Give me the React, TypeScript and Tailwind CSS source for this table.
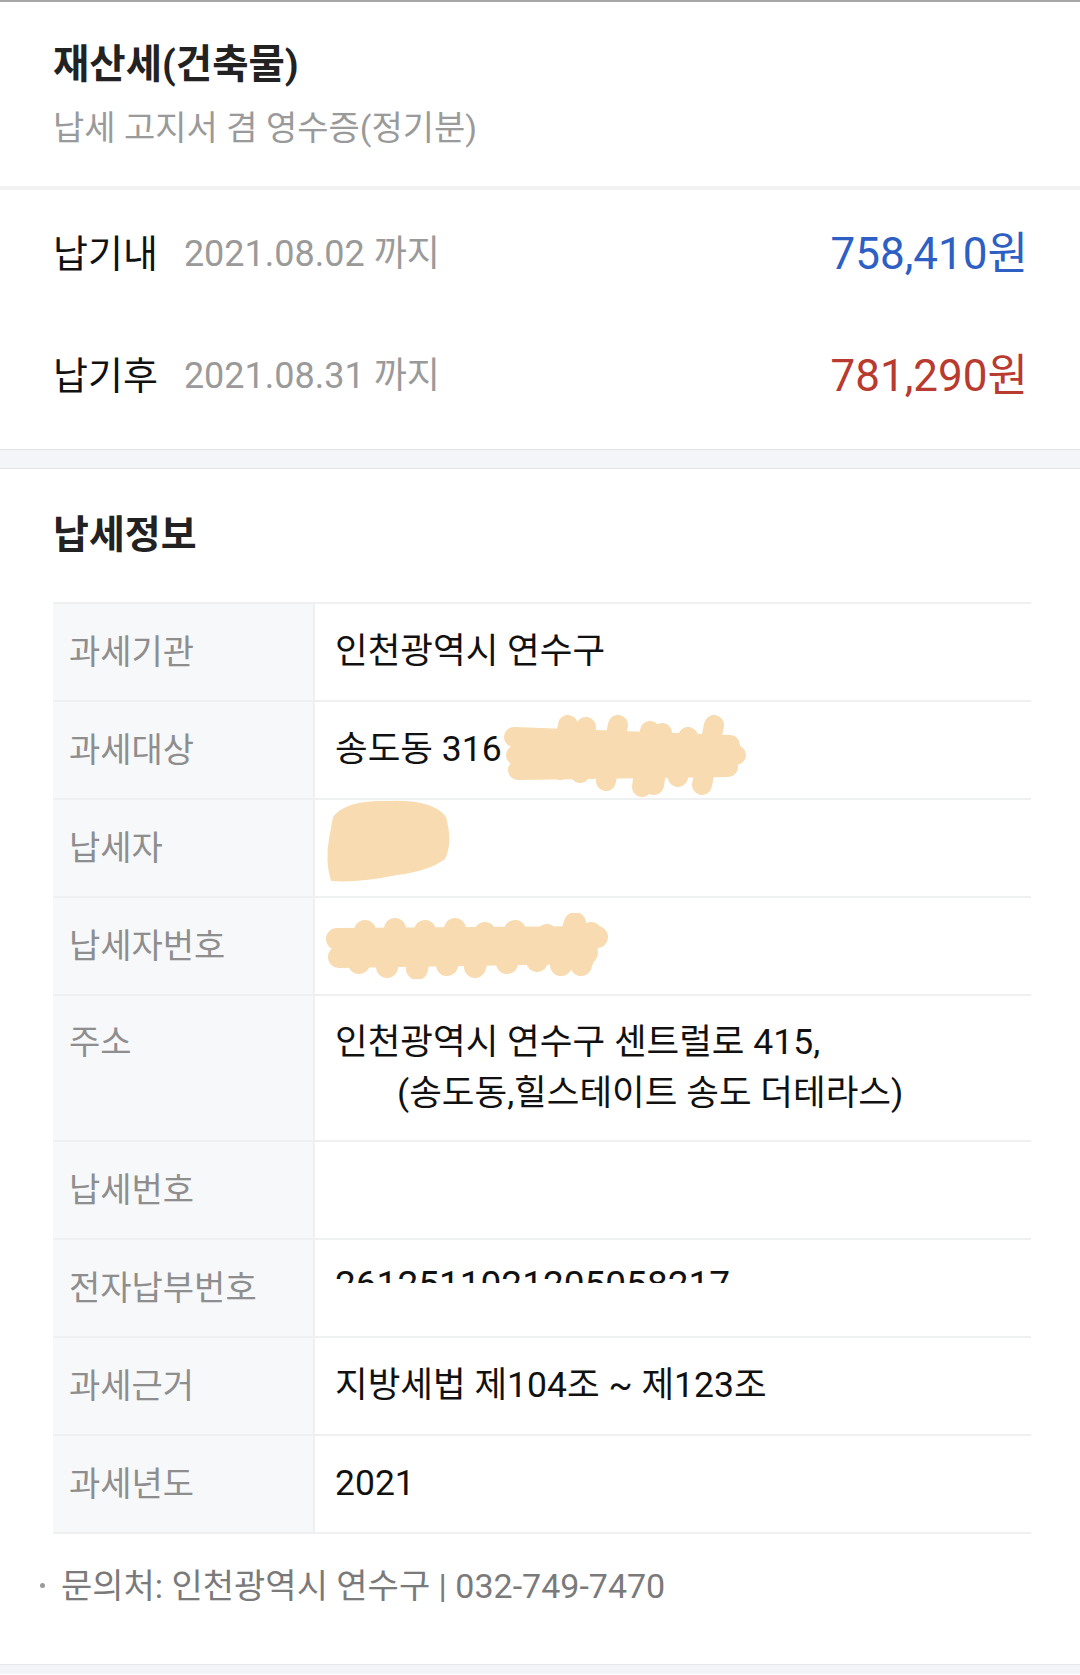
import React from "react";

const PEACH = "#f8dbb0";

function Blob1() {
  return (
    <svg width="245" height="82" viewBox="0 0 245 82" className="shrink-0 mt-[12px]">
      <g stroke={PEACH} strokeWidth="20" strokeLinecap="round" strokeLinejoin="round" fill="none">
        <path d="M12 22 L228 30" />
        <path d="M14 40 L234 40" />
        <path d="M16 55 L226 52" />
        <path d="M66 10 L58 55 M84 12 L78 58 M116 10 L104 66 M148 16 L140 72 M160 18 L152 70 M186 22 L176 62 M212 10 L200 70" />
      </g>
    </svg>
  );
}

function Blob2() {
  return (
    <svg width="128" height="84" viewBox="0 0 128 84" className="shrink-0 -ml-[10px] mb-[14px]">
      <path
        d="M8 18 Q20 1 62 2 Q108 0 121 18 Q128 44 120 60 Q104 72 72 76 Q34 84 6 82 Q0 62 4 40 Z"
        fill={PEACH}
      />
    </svg>
  );
}

function Blob3() {
  return (
    <svg width="285" height="66" viewBox="0 0 285 66" className="shrink-0 -ml-[10px]">
      <g stroke={PEACH} strokeWidth="22" strokeLinecap="round" strokeLinejoin="round" fill="none">
        <path d="M12 26 L272 24" />
        <path d="M14 44 L262 40" />
        <path d="M40 18 L34 50 M70 16 L62 54 M100 18 L92 56 M130 16 L122 52 M160 20 L150 54 M190 18 L182 50 M222 22 L212 48 M250 10 L236 52 M266 20 L256 52" />
      </g>
    </svg>
  );
}

type Row = { label: string; value: React.ReactNode; tall?: boolean };

const rows: Row[] = [
  { label: "과세기관", value: <span>인천광역시 연수구</span> },
  {
    label: "과세대상",
    value: (
      <>
        <span className="whitespace-nowrap">송도동 316</span>
        <Blob1 />
      </>
    ),
  },
  { label: "납세자", value: <Blob2 /> },
  { label: "납세자번호", value: <Blob3 /> },
  {
    label: "주소",
    tall: true,
    value: (
      <div className="leading-[51px]">
        <div>인천광역시 연수구 센트럴로 415,</div>
        <div className="pl-[62px]">(송도동,힐스테이트 송도 더테라스)</div>
      </div>
    ),
  },
  { label: "납세번호", value: <span></span> },
  {
    label: "전자납부번호",
    value: (
      <div className="h-[17px] overflow-hidden self-start mt-[26px]">
        <div className="leading-none text-[37px]">2612511021205058217</div>
      </div>
    ),
  },
  { label: "과세근거", value: <span>지방세법 제104조 ~ 제123조</span> },
  { label: "과세년도", value: <span>2021</span> },
];

export default function App() {
  return (
    <div className="w-[1080px] min-h-[1675px] bg-white font-[Roboto,'Noto_Sans_CJK_KR',sans-serif] border-t-2 border-[#a6a6a6]">
      {/* Header */}
      <div className="pl-[53px] pt-[39px] pb-[38px]">
        <div className="text-[39.5px] font-bold leading-[48px] text-[#222222]">재산세(건축물)</div>
        <div className="mt-[19px] text-[34px] leading-[40px] text-[#9a9a9a]">납세 고지서 겸 영수증(정기분)</div>
      </div>
      <div className="h-[4px] bg-[#f2f2f2]" />

      {/* Amounts */}
      <div className="pt-[3px] pb-[12px] pl-[53px] pr-[52px]">
        <div className="h-[122px] flex items-center">
          <span className="text-[38px] text-[#111111]">납기내</span>
          <span className="ml-[26px] text-[36px] text-[#9a9a9a]">2021.08.02 까지</span>
          <span className="ml-auto text-[44px] text-[#2d5fc4]">758,410원</span>
        </div>
        <div className="h-[122px] flex items-center">
          <span className="text-[38px] text-[#111111]">납기후</span>
          <span className="ml-[26px] text-[36px] text-[#9a9a9a]">2021.08.31 까지</span>
          <span className="ml-auto text-[44px] text-[#b93a2e]">781,290원</span>
        </div>
      </div>
      <div className="h-[20px] bg-[#f4f5f8] border-t border-b border-[#e3e4e6]" />

      {/* Tax info */}
      <div className="pt-[42px]">
        <div className="pl-[53px] text-[39px] font-bold leading-[48px] text-[#222222]">납세정보</div>
        <div className="mt-[43px] ml-[53px] mr-[49px] border-t-2 border-[#eff0f2]">
          {rows.map((r) => (
            <div
              key={r.label}
              className={`flex border-b-2 border-[#eff0f2] ${r.tall ? "h-[146px]" : "h-[98px]"}`}
            >
              <div
                className={`w-[262px] shrink-0 bg-[#f7f8fa] border-r-2 border-[#eef0f2] pl-[16px] text-[34px] text-[#8e8e8e] flex ${
                  r.tall ? "items-start pt-[21px] leading-[51px]" : "items-center"
                }`}
              >
                {r.label}
              </div>
              <div
                className={`flex-1 pl-[20px] text-[35.5px] text-[#111111] flex ${
                  r.tall ? "items-start pt-[21px]" : "items-center"
                }`}
              >
                {r.value}
              </div>
            </div>
          ))}
        </div>
        <div className="pt-[32px] pb-[58px] pl-[40px] flex items-center text-[34px] leading-[40px] text-[#7a7a7a]">
          <span className="w-[5px] h-[5px] rounded-full bg-[#9a9a9a] mr-[16px] -mt-[2px]" />
          <span>문의처: 인천광역시 연수구 | 032-749-7470</span>
        </div>
      </div>
      <div className="h-[10px] bg-[#f3f4f7] border-t border-[#e6e7ea]" />
    </div>
  );
}
